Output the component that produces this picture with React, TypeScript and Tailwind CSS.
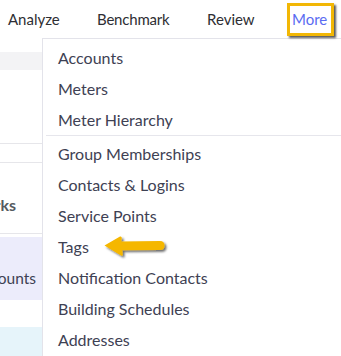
import React from "react";

const items1 = ["Accounts", "Meters", "Meter Hierarchy"];
const items2 = [
  "Group Memberships",
  "Contacts & Logins",
  "Service Points",
  "Tags",
  "Notification Contacts",
  "Building Schedules",
  "Addresses",
];

export default function App() {
  return (
    <div
      className="relative w-[341px] h-[356px] overflow-hidden bg-white"
      style={{ fontFamily: "Lato, 'Noto Sans', sans-serif" }}
    >
      {/* nav */}
      <div className="flex h-[38px] items-center text-[15px] text-[#2e2e33] whitespace-nowrap">
        <span className="ml-[8px] w-[89px]">Analyze</span>
        <span className="w-[110px] tracking-[-0.2px]">Benchmark</span>
        <span className="w-[85px]">Review</span>
        <span className="text-[#5a6cf2]">More</span>
      </div>

      <div className="flex">
        {/* left panel */}
        <div className="w-[42px] shrink-0 flex flex-col overflow-hidden">
          <div className="h-[14px]" />
          <div className="h-[18px] bg-[#f3f3f5]" />
          <div className="h-[73px]" />
          <div className="h-px bg-[#e6e6ea]" />
          <div className="h-[18px]" />
          <div className="h-px bg-[#e6e6ea]" />
          <div className="h-[70px] flex items-end justify-end pr-[26px] pb-[16px]">
            <span className="whitespace-nowrap text-[16px] font-bold text-[#555a60]">
              Benchmarks
            </span>
          </div>
          <div className="h-px bg-[#e6e6ea]" />
          <div className="h-[3px]" />
          <div className="h-[63px] bg-[#ececfb] flex items-end justify-end pr-[6px] pb-[10px]">
            <span className="whitespace-nowrap text-[15.5px] text-[#3e4153]">
              Accounts
            </span>
          </div>
          <div className="h-[27px]" />
          <div className="h-[40px] bg-[#e6f4fa]" />
        </div>

        {/* dropdown */}
        <div className="flex-1 border-l border-t border-b border-[#e3e3ea] bg-white pt-[3px] text-[16px] text-[#3e4153]">
          {items1.map((t) => (
            <div key={t} className="h-[31px] flex items-center pl-[15px] whitespace-nowrap">
              {t}
            </div>
          ))}
          <div className="h-px ml-[3px] mb-[2px] bg-[#e6e6ec]" />
          {items2.map((t) => (
            <div key={t} className="h-[31px] flex items-center pl-[15px] whitespace-nowrap">
              {t}
            </div>
          ))}
        </div>
      </div>

      {/* highlight box */}
      <div className="absolute left-[287px] top-[3px] w-[47px] h-[33px] border-[3px] border-[#f2b705] shadow-[2px_2px_2px_rgba(0,0,0,0.65)]" />

      {/* arrow */}
      <svg
        className="absolute left-[100px] top-[234px]"
        width="72"
        height="28"
        viewBox="0 0 72 28"
      >
        <defs>
          <filter id="sh" x="-20%" y="-40%" width="140%" height="180%">
            <feDropShadow dx="1.8" dy="1.8" stdDeviation="1" floodColor="#000" floodOpacity="0.6" />
          </filter>
        </defs>
        <path
          d="M4.5 11.5 L20 2.5 Q21.8 2 21.8 4 L21.3 7.5 L60 7 Q64.5 7 64.5 11.5 Q64.5 16 60 16 L22.3 16.3 L22.8 20.5 Q22.8 22.3 21 21.5 Z"
          fill="#f5b700"
          filter="url(#sh)"
        />
      </svg>
    </div>
  );
}
